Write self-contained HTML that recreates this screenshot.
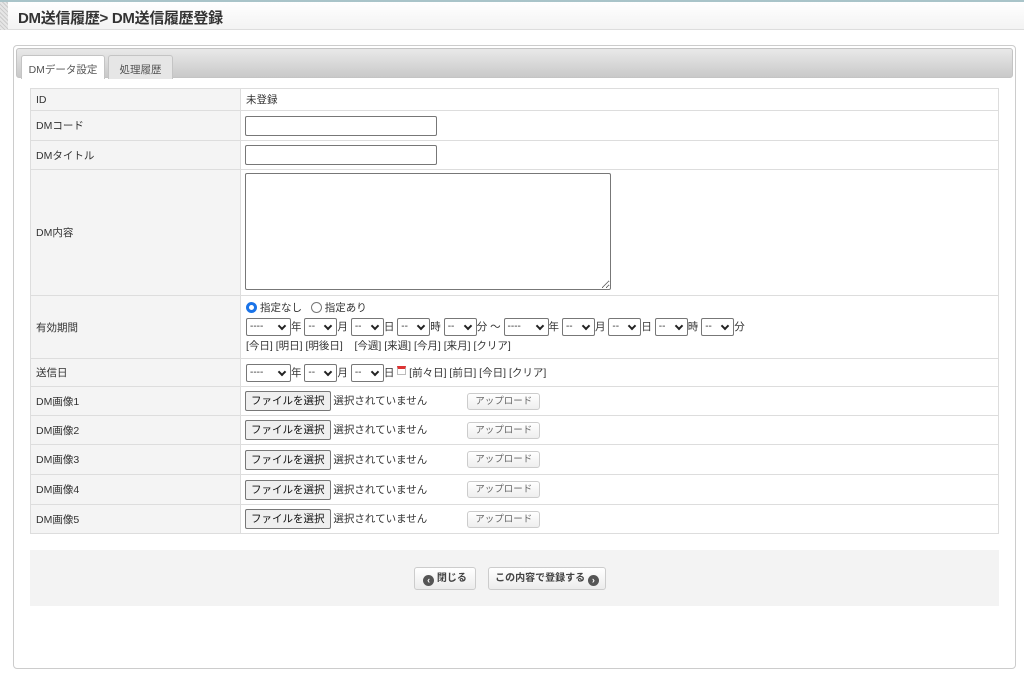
<!DOCTYPE html>
<html><head><meta charset="utf-8"><style>
*{box-sizing:border-box}
body{margin:0;width:1024px;height:683px;background:#fff;font-family:"Liberation Sans","Noto Sans CJK JP",sans-serif;font-size:10.5px;color:#333;position:relative;overflow:hidden}
.hdr{position:absolute;left:0;top:0;width:1024px;height:30px;border-top:2px solid #a9c4c9;border-bottom:1px solid #ddd;background:linear-gradient(#fff,#f3f3f3)}
.hdr .stripe{position:absolute;left:0;top:0;width:8px;height:28px;background:repeating-linear-gradient(45deg,#ccc 0 1px,#e6e6e6 1px 3px)}
.hdr .t{position:absolute;left:18px;top:5px;font-size:15px;font-weight:bold;color:#333;letter-spacing:-0.3px}
.panel{position:absolute;left:13px;top:45px;width:1003px;height:624px;border:1px solid #ccc;border-radius:4px}
.tabbar{position:absolute;left:2px;top:2px;width:997px;height:30px;background:linear-gradient(#e9e9e9,#c9c9c9);border:1px solid #c4c4c4;border-radius:3px}
.tab{position:absolute;top:6px;height:24px;border:1px solid #c4c4c4;border-bottom:none;border-radius:3px 3px 0 0;padding:6px 0 0;text-align:center;color:#555}
table{position:absolute;left:30px;top:88px;width:969px;border-collapse:collapse}
td{border:1px solid #ddd;padding:0 5px;vertical-align:middle}
td.l{width:210px;background:#f4f4f4}
input.tx{width:192px;height:20px;border:1px solid #777;border-radius:2px;margin-left:-1px}
textarea{width:366px;height:117px;border:1px solid #777;border-radius:2px;margin-top:1px;margin-left:-1px}
.sel{display:inline-block;height:18px;border:1px solid #777;border-radius:2px;vertical-align:middle;font-size:10px;line-height:14px;padding:1px 3px;position:relative;background:#fff}
.sel:after{content:"";position:absolute;right:5px;top:4px;width:4px;height:4px;border-right:2px solid #222;border-bottom:2px solid #222;transform:rotate(45deg)}
.fb{display:inline-block;height:20px;border:1px solid #777;border-radius:2px;background:#efefef;padding:3px 5px;font-size:10.5px;line-height:13px;color:#111;vertical-align:middle;margin-left:-1px}
.up{display:inline-block;height:17px;width:73px;border:1px solid #ccc;border-radius:3px;background:linear-gradient(#fff,#eee);font-size:9.5px;line-height:13px;color:#666;text-align:center;padding-top:1px;vertical-align:middle;margin-left:37px}
.foot{position:absolute;left:30px;top:550px;width:969px;height:56px;background:#f3f3f3}
.btn{position:absolute;top:17px;height:23px;border:1px solid #ccc;border-radius:3px;background:linear-gradient(#fff,#ececec);font-size:10px;font-weight:bold;color:#444;line-height:21px;text-align:center}
.ic{display:inline-block;width:11px;height:11px;border-radius:50%;background:#555;color:#fff;font-size:9px;line-height:10px;text-align:center;vertical-align:-2px}
.rad{display:inline-block;width:11px;height:11px;border-radius:50%;border:1px solid #777;vertical-align:-2px;margin-right:3px}
</style></head><body>
<div class="hdr"><div class="stripe"></div><div class="t">DM送信履歴&gt; DM送信履歴登録</div></div>
<div class="panel">
<div class="tabbar">
<div class="tab" style="left:4px;width:84px;background:#fff">DMデータ設定</div>
<div class="tab" style="left:91px;width:65px;background:#e6e6e6">処理履歴</div>
</div>
</div>
<table>
<tr style="height:22px"><td class="l">ID</td><td>未登録</td></tr>
<tr style="height:30px"><td class="l">DMコード</td><td><input class="tx"></td></tr>
<tr style="height:29px"><td class="l">DMタイトル</td><td><input class="tx"></td></tr>
<tr style="height:126px"><td class="l">DM内容</td><td><textarea></textarea></td></tr>
<tr style="height:63px"><td class="l">有効期間</td><td style="line-height:19px">
<span class="rad" style="border:3px solid #1a73e8"></span>指定なし&nbsp;&nbsp; <span class="rad"></span>指定あり<br>
<span class="sel" style="width:45px">----</span>年 <span class="sel" style="width:33px">--</span>月 <span class="sel" style="width:33px">--</span>日 <span class="sel" style="width:33px">--</span>時 <span class="sel" style="width:33px">--</span>分 ～ <span class="sel" style="width:45px">----</span>年 <span class="sel" style="width:33px">--</span>月 <span class="sel" style="width:33px">--</span>日 <span class="sel" style="width:33px">--</span>時 <span class="sel" style="width:33px">--</span>分<br>
[今日] [明日] [明後日]&nbsp;&nbsp;&nbsp; [今週] [来週] [今月] [来月] [クリア]</td></tr>
<tr style="height:28px"><td class="l">送信日</td><td><span class="sel" style="width:45px">----</span>年 <span class="sel" style="width:33px">--</span>月 <span class="sel" style="width:33px">--</span>日 <span style="display:inline-block;width:9px;height:9px;border:1px solid #bbb;border-top:3px solid #d33;vertical-align:0"></span> [前々日] [前日] [今日] [クリア]</td></tr>
<tr style="height:29px"><td class="l">DM画像1</td><td><span class="fb">ファイルを選択</span> 選択されていません <span class="up">アップロード</span></td></tr>
<tr style="height:29px"><td class="l">DM画像2</td><td><span class="fb">ファイルを選択</span> 選択されていません <span class="up">アップロード</span></td></tr>
<tr style="height:30px"><td class="l">DM画像3</td><td><span class="fb">ファイルを選択</span> 選択されていません <span class="up">アップロード</span></td></tr>
<tr style="height:30px"><td class="l">DM画像4</td><td><span class="fb">ファイルを選択</span> 選択されていません <span class="up">アップロード</span></td></tr>
<tr style="height:29px"><td class="l">DM画像5</td><td><span class="fb">ファイルを選択</span> 選択されていません <span class="up">アップロード</span></td></tr>
</table>
<div class="foot">
<div class="btn" style="left:384px;width:62px"><span class="ic">‹</span> 閉じる</div>
<div class="btn" style="left:458px;width:118px">この内容で登録する <span class="ic">›</span></div>
</div>
</body></html>
